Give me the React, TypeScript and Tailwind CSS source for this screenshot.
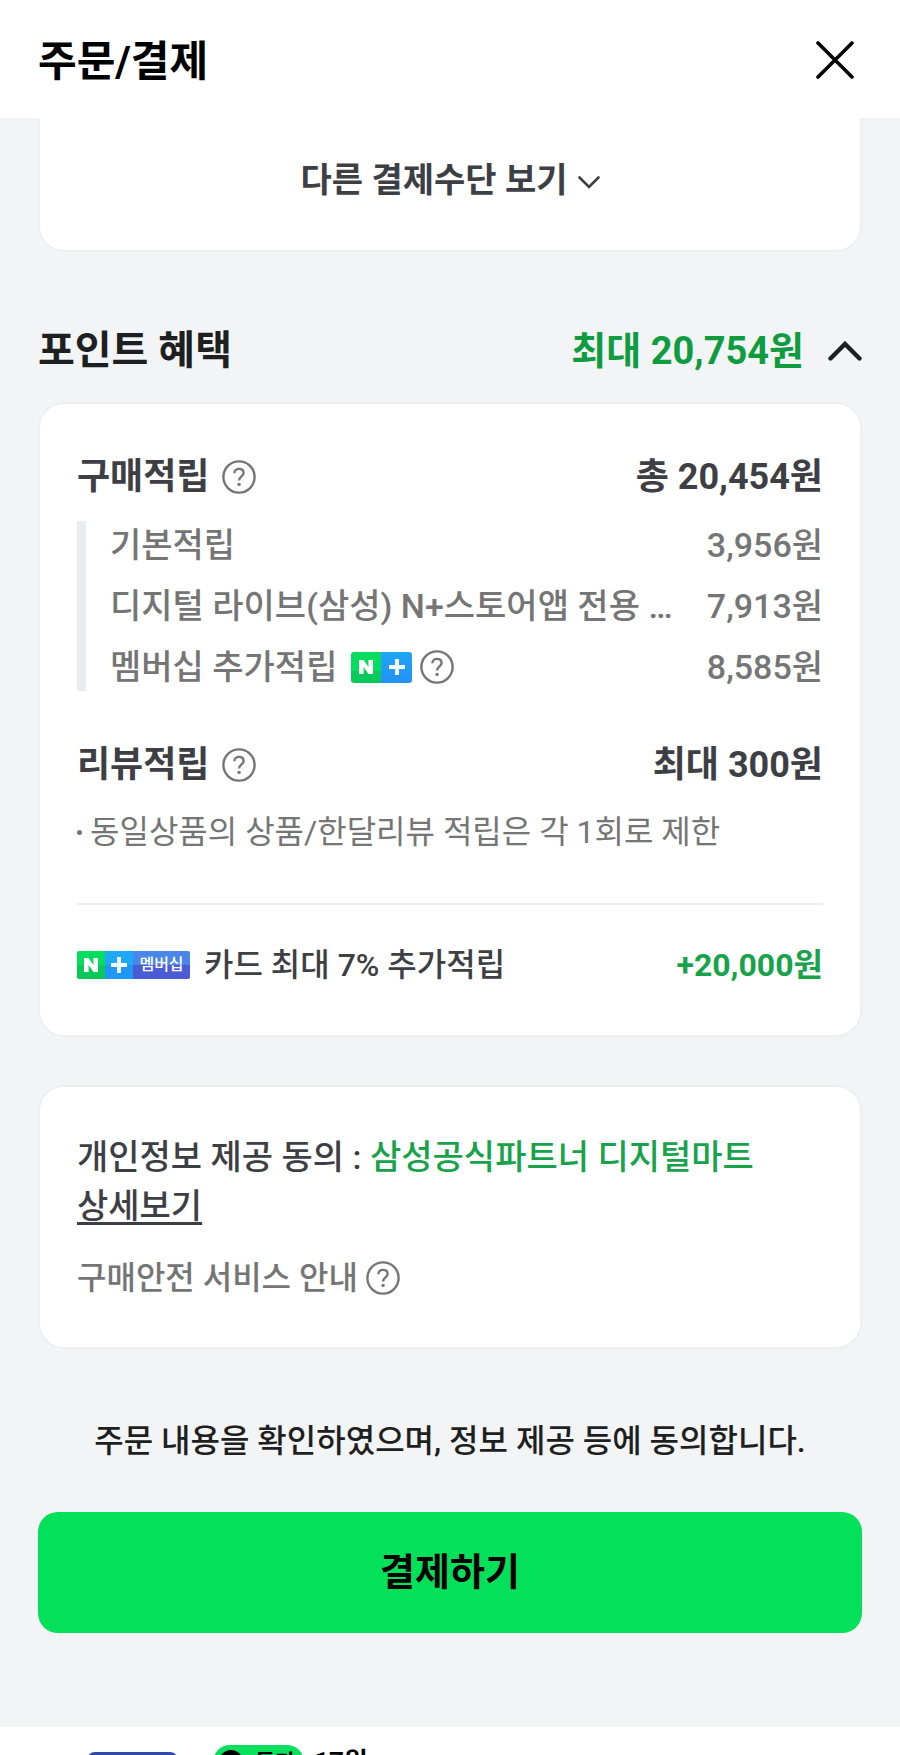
import type { ReactNode } from "react"

const rows: { label: string; price: string; membership?: boolean }[] = [
  { label: "기본적립", price: "3,956원" },
  { label: "디지털 라이브(삼성) N+스토어앱 전용 …", price: "7,913원" },
  { label: "멤버십 추가적립", price: "8,585원", membership: true },
]

function HelpButton({ label }: { label: string }) {
  return (
    <button type="button" aria-label={label} className="shrink-0 text-[#757575]">
      <svg className="size-[34px]" viewBox="0 0 34 34" fill="none" stroke="currentColor" strokeWidth="2.4">
        <circle cx="17" cy="17" r="15.6" />
        <path d="M12.4 13.2c0-2.6 1.9-4.3 4.6-4.3s4.6 1.6 4.6 4.1c0 3.3-4.5 3.6-4.5 7.4" />
        <circle cx="17.1" cy="24.4" r="1.7" fill="currentColor" stroke="none" />
      </svg>
    </button>
  )
}

function PlusMark() {
  return (
    <svg className="size-4" viewBox="0 0 16 16" stroke="white" strokeWidth="3.8">
      <path d="M8 0v16M0 8h16" />
    </svg>
  )
}

function NMark() {
  return (
    <svg className="size-3.5" viewBox="0 0 16 16" fill="white">
      <path d="M0 0h5.2l5.6 8V0H16v16h-5.2L5.2 8v8H0z" />
    </svg>
  )
}

function PlusBadge() {
  return (
    <span className="flex h-[31px] shrink-0 overflow-hidden rounded-[3px]">
      <span className="flex w-[30px] items-center justify-center bg-linear-to-b from-[#06dc5e] from-60% to-[#08c95a] to-60%">
        <NMark />
      </span>
      <span className="flex w-[31px] items-center justify-center bg-linear-to-b from-[#1fa6f6] to-[#2391f5]">
        <PlusMark />
      </span>
    </span>
  )
}

function MembershipBadge() {
  return (
    <span className="flex h-7 shrink-0 overflow-hidden rounded-xs">
      <span className="flex w-7 items-center justify-center bg-linear-to-b from-[#06dc5e] from-50% to-[#08c95a] to-50%">
        <NMark />
      </span>
      <span className="flex w-7 items-center justify-center bg-linear-to-b from-[#1ba9f8] from-50% to-[#1f97f6] to-50%">
        <PlusMark />
      </span>
      <span className="flex w-[57px] items-center justify-center bg-linear-to-b from-[#4a86ea] from-50% to-[#4a5bd4] to-50% text-base font-medium text-white">
        멤버십
      </span>
    </span>
  )
}

function Card({ children, className = "" }: { children: ReactNode; className?: string }) {
  return <div className={`rounded-[26px] border-2 border-[#eeeff1] bg-white px-[37px] ${className}`}>{children}</div>
}

export default function App() {
  return (
    <div className="h-screen overflow-hidden bg-[#f3f4f6] font-['Roboto','Noto_Sans_CJK_KR',sans-serif] font-medium text-[#3e3f44]">
      <header className="flex h-[118px] items-center justify-between bg-white px-[38px] pt-0.5 text-black">
        <h1 className="pt-1 text-[42px] leading-[60px] font-bold">주문/결제</h1>
        <button type="button" aria-label="닫기" className="px-2">
          <svg className="size-[38px]" viewBox="0 0 38 38" stroke="currentColor" strokeWidth="3.6" strokeLinecap="round">
            <path d="M2 2l34 34M36 2L2 36" />
          </svg>
        </button>
      </header>

      <main className="px-[38px]">
        <div className="flex h-[134px] items-center justify-center rounded-b-[26px] border-2 border-t-0 border-[#eeeff1] bg-white">
          <button type="button" className="mb-2 flex items-center gap-2.5 text-[34px] leading-[48px] font-bold">
            다른 결제수단 보기
            <svg className="mt-1 w-[22px]" viewBox="0 0 22 13" fill="none" stroke="currentColor" strokeWidth="2.6" strokeLinecap="round">
              <path d="M1.5 1.5l9.5 9.5 9.5-9.5" />
            </svg>
          </button>
        </div>

        <section>
          <div className="flex h-[150px] items-end justify-between pb-[21px] leading-[60px] font-bold">
            <h2 className="text-[40px] text-[#1e1f21]">포인트 혜택</h2>
            <button type="button" aria-expanded="true" className="flex items-center gap-6 text-[38px] text-[#0f9c40]">
              최대 20,754원
              <svg className="w-[34px] text-[#1e1f21]" viewBox="0 0 34 20" fill="none" stroke="currentColor" strokeWidth="4.4" strokeLinecap="round">
                <path d="M2.5 17.5L17 3l14.5 14.5" />
              </svg>
            </button>
          </div>

          <Card className="pt-[47px] pb-[47px]">
            <div className="flex items-center justify-between text-4xl leading-[52px] font-bold">
              <h3 className="flex items-center gap-[13px]">
                구매적립
                <HelpButton label="구매적립 안내" />
              </h3>
              <span>총 20,454원</span>
            </div>
            <ul className="mt-[18px] flex flex-col gap-[13px] border-l-[9px] border-[#ebecef] pl-6 text-[34px] leading-[48px] text-[#757575]">
              {rows.map((row) => (
                <li key={row.label} className="flex items-center justify-between gap-6">
                  <span className="flex min-w-0 items-center gap-2">
                    <span className="mr-1.5 truncate">{row.label}</span>
                    {row.membership && (
                      <>
                        <PlusBadge />
                        <HelpButton label="멤버십 추가적립 안내" />
                      </>
                    )}
                  </span>
                  <span className="shrink-0">{row.price}</span>
                </li>
              ))}
            </ul>

            <div className="mt-12 flex items-center justify-between text-4xl leading-[52px] font-bold">
              <h3 className="flex items-center gap-[13px]">
                리뷰적립
                <HelpButton label="리뷰적립 안내" />
              </h3>
              <span>최대 300원</span>
            </div>
            <p className="mt-[18px] flex items-center gap-2 text-[32px] leading-[46px] font-normal text-[#757575]">
              <span className="size-[5px] rounded-full bg-[#757575]" />
              동일상품의 상품/한달리뷰 적립은 각 1회로 제한
            </p>

            <div className="mt-12 flex items-center justify-between border-t-2 border-[#eeeff1] pt-[37px] text-[32px] leading-[46px]">
              <span className="flex items-center gap-3.5">
                <MembershipBadge />
                카드 최대 7% 추가적립
              </span>
              <span className="font-bold text-[#18a34b]">+20,000원</span>
            </div>
          </Card>
        </section>

        <Card className="mt-12 pt-[46px] pb-[46px]">
          <p className="text-[34px] leading-[49px]">
            개인정보 제공 동의 : <span className="text-[#18a34b]">삼성공식파트너 디지털마트</span>
            <br />
            <a href="#detail" className="underline decoration-3 underline-offset-4">상세보기</a>
          </p>
          <p className="mt-6 flex items-center gap-2 text-[32px] leading-[46px] text-[#757575]">
            구매안전 서비스 안내
            <HelpButton label="구매안전 서비스 안내" />
          </p>
        </Card>

        <p className="mt-[69px] text-center text-[32px] leading-[46px] text-[#1e1f21]">
          주문 내용을 확인하였으며, 정보 제공 등에 동의합니다.
        </p>
        <button type="button" className="mt-12 h-[121px] w-full rounded-[20px] bg-[#03e15b] text-[38px] font-bold text-black">
          결제하기
        </button>
      </main>

      <footer className="mt-[94px] flex items-start bg-white px-[87px] pt-[18px] font-bold text-black">
        <div className="mt-[7px] h-20 w-[91px] rounded-lg bg-[#2f4da8]" />
        <div className="ml-[35px] flex h-[34px] w-[91px] items-center gap-3 rounded-full bg-[#0be05e] px-1.5 text-[22px] whitespace-nowrap">
          <span className="size-6 shrink-0 rounded-full bg-black" />
          특가
        </div>
        <span className="ml-2.5 text-[26px] leading-[34px]">17원</span>
      </footer>
    </div>
  )
}
